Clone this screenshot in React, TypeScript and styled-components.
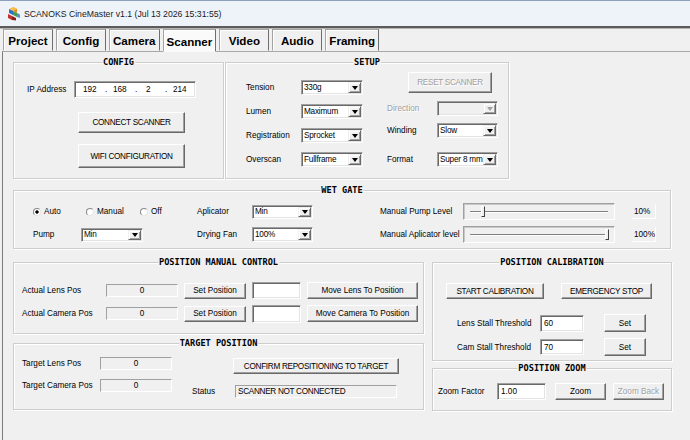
import React from "react"
import styled, {createGlobalStyle} from "styled-components"

const GlobalStyle = createGlobalStyle`
    html, body {
        margin: 0;
        padding: 0;
        background: #f0f0f0;
    }
    body {
        width: 690px;
        height: 440px;
        overflow: hidden;
        font-family: "Liberation Sans", Arial, sans-serif;
        font-size: 8.2px;
        color: #000;
    }
`

const Window = styled.div`
    width: 690px;
    height: 440px;
    display: flex;
    flex-direction: column;
    background: #f0f0f0;
`

const TitleBar = styled.div`
    height: 25px;
    flex: none;
    display: flex;
    align-items: center;
    gap: 3px;
    padding-left: 6px;
    background: #eef3fa;
    border-top: 1px solid #8ca1b9;
    border-bottom: 2px solid #5b5b5b;
    font-size: 8.7px;
    color: #1b1b1b;
`

const TabStrip = styled.div`
    height: 22px;
    flex: none;
    display: flex;
    gap: 3px;
    padding-left: 3px;
    border-top: 1px solid #b4b4b4;
`

const Tab = styled.div<{$active?: boolean}>`
    position: relative;
    z-index: ${p => p.$active ? 1 : 0};
    box-sizing: border-box;
    min-width: 50px;
    height: ${p => p.$active ? 23 : 22}px;
    padding: ${p => p.$active ? 2 : 0}px 3px 0;
    display: flex;
    align-items: center;
    justify-content: center;
    background: ${p => p.$active ? '#fafafa' : '#f0f0f0'};
    border: 1px solid;
    border-color: #a3a3a3 #6e6e6e transparent #a3a3a3;
    box-shadow: inset 1px 1px 0 #fff;
    font-size: 11.6px;
    font-weight: bold;
`

const TabPage = styled.div`
    flex: 1;
    margin-left: 2px;
    padding: 10px 0 0 10px;
    display: flex;
    flex-direction: column;
    border-left: 1px solid #7c7c7c;
    border-top: 1px solid #a8a8a8;
`

const Row = styled.div<{$gap: number; $mt?: number}>`
    display: flex;
    align-items: flex-start;
    gap: ${p => p.$gap}px;
    margin-top: ${p => p.$mt || 0}px;
`

const Column = styled.div<{$gap: number}>`
    display: flex;
    flex-direction: column;
    gap: ${p => p.$gap}px;
`

const Group = styled.div<{$w: number; $h: number; $mt?: number}>`
    position: relative;
    box-sizing: border-box;
    flex: none;
    width: ${p => p.$w}px;
    height: ${p => p.$h}px;
    margin-top: ${p => p.$mt || 0}px;
    border: 1px solid #cdcdcd;
    box-shadow: inset 1px 1px 0 #fff, 1px 1px 0 #fff;
`

const GroupTitle = styled.span`
    position: absolute;
    top: -6px;
    left: 50%;
    transform: translateX(-50%);
    padding: 0 1px;
    background: #f0f0f0;
    font-family: "DejaVu Sans Mono", monospace;
    font-weight: bold;
    font-size: 8.6px;
    line-height: 10px;
    white-space: nowrap;
`

const Label = styled.span<{$w?: number; $disabled?: boolean}>`
    flex: none;
    width: ${p => p.$w ? `${p.$w}px` : 'auto'};
    white-space: nowrap;
    color: ${p => p.$disabled ? '#a0a0a0' : '#000'};
    text-shadow: ${p => p.$disabled ? '1px 1px 0 #fff' : 'none'};
`

const Button = styled.button<{$w: number; $h: number; $caps?: boolean; $ml?: number; $mt?: number}>`
    box-sizing: border-box;
    flex: none;
    width: ${p => p.$w}px;
    height: ${p => p.$h}px;
    margin: ${p => p.$mt || 0}px 0 0 ${p => p.$ml || 0}px;
    padding: 0;
    display: flex;
    align-items: center;
    justify-content: center;
    background: #efefef;
    border: 1px solid;
    border-color: #fff #696969 #696969 #fff;
    box-shadow: inset -1px -1px 0 #a0a0a0;
    font-family: inherit;
    font-size: 8.2px;
    letter-spacing: ${p => p.$caps ? '-0.3px' : '0'};
    color: #000;
    white-space: nowrap;

    &:disabled {
        color: #a0a0a0;
        text-shadow: 1px 1px 0 #fff;
    }
`

const TextBox = styled.div<{$w: number; $h: number}>`
    box-sizing: border-box;
    flex: none;
    width: ${p => p.$w}px;
    height: ${p => p.$h}px;
    padding-left: 3px;
    display: flex;
    align-items: center;
    background: #fff;
    border: 1px solid;
    border-color: #a0a0a0 #fff #fff #a0a0a0;
    box-shadow: inset 1px 1px 0 #696969, inset -1px -1px 0 #e3e3e3;
`

const ReadBox = styled.div<{$w: number; $h: number; $left?: boolean}>`
    box-sizing: border-box;
    flex: none;
    width: ${p => p.$w}px;
    height: ${p => p.$h}px;
    padding-left: ${p => p.$left ? 2 : 0}px;
    display: flex;
    align-items: center;
    justify-content: ${p => p.$left ? 'flex-start' : 'center'};
    border: 1px solid;
    border-color: #a0a0a0 #fff #fff #a0a0a0;
    letter-spacing: ${p => p.$left ? '-0.3px' : '0'};
`

const ValueTag = styled.div`
    box-sizing: border-box;
    width: 24px;
    height: 15px;
    padding-left: 1px;
    display: flex;
    align-items: center;
    border: 1px solid;
    border-color: #f0f0f0 #fff #fff #f0f0f0;
`

const SelectBox = styled.div<{$w: number; $h: number; $disabled?: boolean}>`
    box-sizing: border-box;
    flex: none;
    width: ${p => p.$w}px;
    height: ${p => p.$h}px;
    padding: 1px;
    display: flex;
    background: ${p => p.$disabled ? '#f0f0f0' : '#fff'};
    border: 1px solid;
    border-color: #a0a0a0 #fff #fff #a0a0a0;
    box-shadow: inset 1px 1px 0 #696969, inset -1px -1px 0 #e3e3e3;
`

const SelectValue = styled.span`
    flex: 1;
    padding-left: 1px;
    display: flex;
    align-items: center;
    overflow: hidden;
    white-space: nowrap;
    letter-spacing: -0.2px;
`

const SelectArrow = styled.span<{$disabled?: boolean}>`
    box-sizing: border-box;
    flex: none;
    width: 13px;
    display: flex;
    align-items: center;
    justify-content: center;
    background: #f0f0f0;
    border: 1px solid;
    border-color: #f0f0f0 #696969 #696969 #f0f0f0;
    box-shadow: inset 1px 1px 0 #fff, inset -1px -1px 0 #a0a0a0;

    &::after {
        content: "";
        border-left: 3.5px solid transparent;
        border-right: 3.5px solid transparent;
        border-top: 4px solid ${p => p.$disabled ? '#a0a0a0' : '#000'};
    }
`

const Select: React.FC<{w: number; h?: number; value?: string; disabled?: boolean}> = ({w, h = 15, value, disabled}) => (
    <SelectBox $w={w} $h={h} $disabled={disabled}>
        <SelectValue>{value}</SelectValue>
        <SelectArrow $disabled={disabled} />
    </SelectBox>
)

const Field = styled.div<{$mt?: number}>`
    display: flex;
    align-items: center;
    margin-top: ${p => p.$mt || 0}px;
`

/* CONFIG */

const ConfigBody = styled.div`
    padding: 18px 0 0 13px;
    display: flex;
    flex-direction: column;
    align-items: flex-start;
`

const IpBox = styled(TextBox)`
    padding-left: 8px;
`

const IpPart = styled.span<{$w?: number}>`
    flex: none;
    width: ${p => p.$w ? `${p.$w}px` : 'auto'};
`

const ButtonStack = styled.div`
    margin: 14px 0 0 51px;
    display: flex;
    flex-direction: column;
    gap: 11px;
`

/* SETUP */

const SetupBody = styled.div`
    padding: 9px 0 0 20px;
    display: flex;
    gap: 24px;
`

const LeftStack = styled.div`
    padding-top: 8px;
    display: flex;
    flex-direction: column;
    gap: 9px;
`

const RightStack = styled.div`
    display: flex;
    flex-direction: column;
`

/* WET GATE */

const WetGrid = styled.div`
    padding: 12px 0 0 19px;
    display: grid;
    grid-template-columns: 48px 62px 54px 55px 61px 67px 83px 152px 17px auto;
    grid-template-rows: 17px 17px;
    row-gap: 6px;
    align-items: center;
`

const Cell = styled.div<{$col: string}>`
    grid-column: ${p => p.$col};
    display: flex;
    align-items: center;
`

const RadioItem = styled.span<{$w?: number}>`
    flex: none;
    width: ${p => p.$w ? `${p.$w}px` : 'auto'};
    display: flex;
    align-items: center;
    gap: 3px;
`

const RadioDot = styled.span<{$on?: boolean}>`
    box-sizing: border-box;
    width: 8px;
    height: 8px;
    border-radius: 50%;
    border: 1px solid;
    border-color: #8a8a8a #e6e6e6 #e6e6e6 #8a8a8a;
    background: ${p => p.$on ? 'radial-gradient(circle, #000 0 1.4px, #fff 1.9px)' : '#fff'};
`

const SliderFrame = styled.div`
    box-sizing: border-box;
    width: 152px;
    height: 17px;
    padding: 0 6px;
    display: flex;
    align-items: center;
    border: 1px solid;
    border-color: #a0a0a0 #fff #fff #a0a0a0;
    box-shadow: inset 1px 1px 0 #c8c8c8;
`

const SliderTrack = styled.div`
    position: relative;
    flex: 1;
    height: 0;
    border-top: 1px solid #808080;
    border-bottom: 1px solid #fff;
`

const SliderThumb = styled.div`
    position: absolute;
    top: -6px;
    box-sizing: border-box;
    width: 4px;
    height: 11px;
    background: #f0f0f0;
    border: 1px solid;
    border-color: #fff #404040 #404040 #fff;
`

const Slider: React.FC<{value: number}> = ({value}) => (
    <SliderFrame>
        <SliderTrack>
            <SliderThumb style={{left: `calc(${value}% - 3px)`}} />
        </SliderTrack>
    </SliderFrame>
)

/* POSITION MANUAL CONTROL */

const ManualGrid = styled.div`
    padding: 19px 0 0 8px;
    display: grid;
    grid-template-columns: 78px 72px 62px 49px 111px;
    grid-auto-rows: 17px;
    column-gap: 6px;
    row-gap: 6px;
    align-items: center;
`

/* TARGET POSITION */

const TargetBody = styled.div`
    padding: 13px 0 0 8px;
    display: flex;
`

const TargetGrid = styled.div`
    display: grid;
    grid-template-columns: 78px 72px;
    grid-auto-rows: 13px;
    row-gap: 9px;
    align-items: center;
`

const TargetRight = styled.div`
    margin-left: 20px;
    display: flex;
    flex-direction: column;
`

/* CALIBRATION / ZOOM */

const CalBody = styled.div`
    padding: 20px 0 0 13px;
    display: flex;
    flex-direction: column;
`

const ThresholdStack = styled.div`
    margin: 15px 0 0 11px;
    display: flex;
    flex-direction: column;
    gap: 6px;
`

const ZoomBody = styled.div`
    padding: 14px 0 0 5px;
    display: flex;
    align-items: center;
`

const AppIcon = () => (
    <svg width="15" height="15" viewBox="0 0 15 15">
        <path d="M7 1 L11 3 L11 7 L7 5 Z" fill="#e88a1a" />
        <path d="M7 1 L3 3 L7 5 L11 3 Z" fill="#f6c04a" />
        <path d="M3 3 L7 5 L7 9 L3 7 Z" fill="#2f6fc0" />
        <path d="M7 5 L11 7 L11 11 L7 9 Z" fill="#3ea04a" />
        <path d="M2 8 L6 10 L6 14 L2 12 Z" fill="#c8302a" />
        <path d="M6 10 L10 12 L10 14.5 L6 14 Z" fill="#8a2018" />
        <path d="M11 7 L14 8.5 L14 12 L11 11 Z" fill="#5a8fd8" />
    </svg>
)

const tabs = ['Project', 'Config', 'Camera', 'Scanner', 'Video', 'Audio', 'Framing']

export default function App() {
    return (
        <>
            <GlobalStyle />
            <Window>
                <TitleBar>
                    <AppIcon />
                    <span>SCANOKS CineMaster v1.1 (Jul 13 2026 15:31:55)</span>
                </TitleBar>
                <TabStrip>
                    {tabs.map(t => <Tab key={t} $active={t === 'Scanner'}>{t}</Tab>)}
                </TabStrip>
                <TabPage>
                    <Row $gap={1}>
                        <Group $w={211} $h={117}>
                            <GroupTitle>CONFIG</GroupTitle>
                            <ConfigBody>
                                <Field>
                                    <Label $w={47}>IP Address</Label>
                                    <IpBox $w={122} $h={17}>
                                        <IpPart $w={22}>192</IpPart>
                                        <IpPart $w={8}>.</IpPart>
                                        <IpPart $w={22}>168</IpPart>
                                        <IpPart $w={11}>.</IpPart>
                                        <IpPart $w={19}>2</IpPart>
                                        <IpPart $w={8}>.</IpPart>
                                        <IpPart>214</IpPart>
                                    </IpBox>
                                </Field>
                                <ButtonStack>
                                    <Button $w={107} $h={21} $caps>CONNECT SCANNER</Button>
                                    <Button $w={107} $h={24} $caps>WIFI CONFIGURATION</Button>
                                </ButtonStack>
                            </ConfigBody>
                        </Group>
                        <Group $w={284} $h={117}>
                            <GroupTitle>SETUP</GroupTitle>
                            <SetupBody>
                                <LeftStack>
                                    <Field><Label $w={55}>Tension</Label><Select w={62} value="330g" /></Field>
                                    <Field><Label $w={55}>Lumen</Label><Select w={62} value="Maximum" /></Field>
                                    <Field><Label $w={55}>Registration</Label><Select w={62} value="Sprocket" /></Field>
                                    <Field><Label $w={55}>Overscan</Label><Select w={62} value="Fullframe" /></Field>
                                </LeftStack>
                                <RightStack>
                                    <Button $w={84} $h={21} $ml={21} $caps disabled>RESET SCANNER</Button>
                                    <Field $mt={8}><Label $w={50} $disabled>Direction</Label><Select w={61} disabled /></Field>
                                    <Field $mt={7}><Label $w={50}>Winding</Label><Select w={61} value="Slow" /></Field>
                                    <Field $mt={14}><Label $w={50}>Format</Label><Select w={61} value="Super 8 mm" /></Field>
                                </RightStack>
                            </SetupBody>
                        </Group>
                    </Row>

                    <Group $w={658} $h={59} $mt={11}>
                        <GroupTitle>WET GATE</GroupTitle>
                        <WetGrid>
                            <Cell $col="1 / 4">
                                <RadioItem $w={53}><RadioDot $on />Auto</RadioItem>
                                <RadioItem $w={54}><RadioDot />Manual</RadioItem>
                                <RadioItem><RadioDot />Off</RadioItem>
                            </Cell>
                            <Cell $col="4"><Label>Aplicator</Label></Cell>
                            <Cell $col="5"><Select w={61} h={14} value="Min" /></Cell>
                            <Cell $col="7"><Label>Manual Pump Level</Label></Cell>
                            <Cell $col="8"><Slider value={10} /></Cell>
                            <Cell $col="10"><ValueTag>10%</ValueTag></Cell>

                            <Cell $col="1"><Label>Pump</Label></Cell>
                            <Cell $col="2"><Select w={62} h={14} value="Min" /></Cell>
                            <Cell $col="4"><Label>Drying Fan</Label></Cell>
                            <Cell $col="5"><Select w={61} h={15} value="100%" /></Cell>
                            <Cell $col="7"><Label>Manual Aplicator level</Label></Cell>
                            <Cell $col="8"><Slider value={100} /></Cell>
                            <Cell $col="10"><ValueTag>100%</ValueTag></Cell>
                        </WetGrid>
                    </Group>

                    <Row $gap={8} $mt={13}>
                        <Column $gap={9}>
                            <Group $w={411} $h={72}>
                                <GroupTitle>POSITION MANUAL CONTROL</GroupTitle>
                                <ManualGrid>
                                    <Label>Actual Lens Pos</Label>
                                    <ReadBox $w={72} $h={13}>0</ReadBox>
                                    <Button $w={62} $h={16}>Set Position</Button>
                                    <TextBox $w={49} $h={17} />
                                    <Button $w={111} $h={17}>Move Lens To Position</Button>

                                    <Label>Actual Camera Pos</Label>
                                    <ReadBox $w={72} $h={13}>0</ReadBox>
                                    <Button $w={62} $h={16}>Set Position</Button>
                                    <TextBox $w={49} $h={18} />
                                    <Button $w={111} $h={17}>Move Camera To Position</Button>
                                </ManualGrid>
                            </Group>
                            <Group $w={411} $h={67}>
                                <GroupTitle>TARGET POSITION</GroupTitle>
                                <TargetBody>
                                    <TargetGrid>
                                        <Label>Target Lens Pos</Label>
                                        <ReadBox $w={72} $h={13}>0</ReadBox>
                                        <Label>Target Camera Pos</Label>
                                        <ReadBox $w={72} $h={13}>0</ReadBox>
                                    </TargetGrid>
                                    <TargetRight>
                                        <Button $w={166} $h={16} $ml={41} $mt={1} $caps>CONFIRM REPOSITIONING TO TARGET</Button>
                                        <Field $mt={11}>
                                            <Label $w={43}>Status</Label>
                                            <ReadBox $w={162} $h={13} $left>SCANNER NOT CONNECTED</ReadBox>
                                        </Field>
                                    </TargetRight>
                                </TargetBody>
                            </Group>
                        </Column>
                        <Column $gap={7}>
                            <Group $w={240} $h={99}>
                                <GroupTitle>POSITION CALIBRATION</GroupTitle>
                                <CalBody>
                                    <Row $gap={17}>
                                        <Button $w={98} $h={16} $caps>START CALIBRATION</Button>
                                        <Button $w={91} $h={16} $caps>EMERGENCY STOP</Button>
                                    </Row>
                                    <ThresholdStack>
                                        <Field>
                                            <Label $w={83}>Lens Stall Threshold</Label>
                                            <TextBox $w={44} $h={17}>60</TextBox>
                                            <Button $w={42} $h={18} $ml={20}>Set</Button>
                                        </Field>
                                        <Field>
                                            <Label $w={83}>Cam Stall Threshold</Label>
                                            <TextBox $w={44} $h={16}>70</TextBox>
                                            <Button $w={42} $h={18} $ml={20}>Set</Button>
                                        </Field>
                                    </ThresholdStack>
                                </CalBody>
                            </Group>
                            <Group $w={240} $h={43}>
                                <GroupTitle>POSITION ZOOM</GroupTitle>
                                <ZoomBody>
                                    <Label $w={59}>Zoom Factor</Label>
                                    <TextBox $w={49} $h={17}>1.00</TextBox>
                                    <Button $w={51} $h={17} $ml={9}>Zoom</Button>
                                    <Button $w={51} $h={17} $ml={7} disabled>Zoom Back</Button>
                                </ZoomBody>
                            </Group>
                        </Column>
                    </Row>
                </TabPage>
            </Window>
        </>
    )
}
